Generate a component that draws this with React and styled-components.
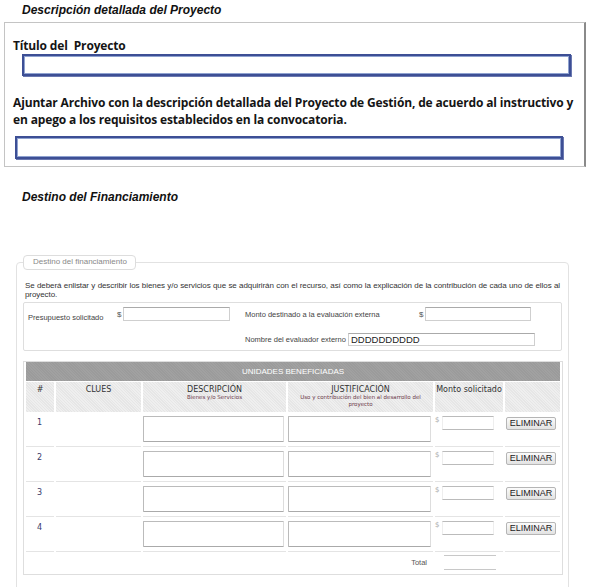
import styled, { createGlobalStyle } from 'styled-components';

const Global = createGlobalStyle`
  body { margin: 0; background: #fff; font-family: "Liberation Sans", Arial, sans-serif; }
`;

const Page = styled.div`
  width: 590px;
  padding-top: 2px;
`;

const SectionTitle = styled.h2`
  margin: 0 0 0 22px;
  font-size: 12px;
  line-height: 16px;
  font-style: italic;
  font-weight: bold;
  color: #111;
  height: ${p => p.$h}px;
`;

const Panel = styled.div`
  margin: 0 4px 0 4px;
  height: 145px;
  box-sizing: border-box;
  border: 1px solid #c4c4c4;
  border-right: 2px solid #8a8a8a;
  padding: 14px 10px 0 8px;
`;

const BoldLabel = styled.div`
  font-family: "Open Sans", "Liberation Sans", sans-serif;
  font-weight: 700;
  font-size: 12px;
  line-height: 17px;
  color: #151515;
  letter-spacing: -0.15px;
  white-space: nowrap;
  margin-top: ${p => p.$top || 0}px;
`;

const BlueInput = styled.div`
  box-sizing: border-box;
  height: ${p => p.$h}px;
  width: ${p => p.$w}px;
  margin-left: ${p => p.$left}px;
  margin-top: ${p => p.$top}px;
  border: 2px solid #3d4f95;
  box-shadow: inset 0 0 0 1px #8fa2d0, 1px 1px 0 #6a78b0;
  background: #fff;
`;

const Fieldset = styled.fieldset`
  margin: 50px 21px 0 16px;
  padding: 7px 6px 20px 6px;
  border: 1px solid #e2e2e2;
  border-radius: 4px;
  min-width: 0;
`;

const Legend = styled.legend`
  margin-left: 0;
  font-size: 8px;
  color: #888;
  border: 1px solid #ddd;
  border-radius: 4px;
  padding: 1px 8px 2px 9px;
  line-height: 10px;
  background: #fff;
`;

const Intro = styled.p`
  margin: 4px 2px 0 2px;
  font-size: 8px;
  line-height: 9px;
  color: #333;
  letter-spacing: -0.08px;
  text-align: justify;
`;

const FieldsBox = styled.div`
  margin-top: 3px;
  height: 49px;
  box-sizing: border-box;
  border: 1px solid #dedede;
  border-radius: 2px;
  display: grid;
  grid-template-columns: 217px 1fr;
  grid-template-rows: 22px 1fr;
  padding-left: 4px;
`;

const FieldCell = styled.div`
  display: flex;
  align-items: center;
  font-size: 7.5px;
  color: #444;
  grid-column: ${p => p.$col};
  padding-top: ${p => p.$pt || 0}px;
`;

const FieldLabel = styled.span`
  width: ${p => p.$w}px;
  flex-shrink: 0;
  white-space: nowrap;
  padding-top: ${p => p.$pt || 0}px;
`;

const Dollar = styled.span`
  font-size: 8px;
  color: #555;
  width: 6px;
`;

const TextBox = styled.div`
  box-sizing: border-box;
  width: ${p => p.$w}px;
  height: ${p => p.$h || 14}px;
  border: 1px solid #cfcfcf;
  border-top-color: #aaa;
  font-size: 9.5px;
  color: #222;
  line-height: 11px;
  padding-left: 2px;
  background: #fff;
`;

const TableWrap = styled.div`
  margin-top: 10px;
  width: 538px;
  border: 1px solid #dedede;
`;

const Table = styled.table`
  width: 100%;
  border-collapse: separate;
  border-spacing: 2px 0;
  font-family: "DejaVu Sans", Verdana, sans-serif;
  table-layout: fixed;
`;

const GreyBar = styled.th`
  background: #9b9b9b;
  background-image: repeating-linear-gradient(45deg, rgba(255,255,255,0.06) 0 1px, transparent 1px 2px);
  color: #fff;
  font-family: "Liberation Sans", Arial, sans-serif;
  font-size: 8px;
  font-weight: normal;
  height: 19px;
  padding: 0;
  border-bottom: 1px solid #fff;
`;

const HeadCell = styled.th`
  box-sizing: border-box;
  background: #e6e6e6;
  background-image: repeating-linear-gradient(45deg, rgba(255,255,255,0.35) 0 1px, transparent 1px 2px);
  height: 30px;
  padding: 3px 0 0 0;
  vertical-align: top;
  font-size: 8px;
  font-weight: normal;
  color: #333;
  line-height: 9px;
`;

const Sub = styled.div`
  font-size: 5.5px;
  line-height: 7px;
  color: #6b3a4a;
`;

const Cell = styled.td`
  height: ${p => p.$h || 34}px;
  padding: 0;
  vertical-align: top;
  border-bottom: ${p => (p.$last ? 0 : '1px solid #e4e4e4')};
  font-size: 8px;
  color: #444;
  text-align: ${p => p.$align || 'left'};
`;

const RowNum = styled.div`
  padding: 6px 0 0 11px;
  font-size: 8px;
  color: #3a3a6a;
`;

const Area = styled.div`
  box-sizing: border-box;
  margin-top: 4px;
  width: ${p => p.$w}px;
  height: 26px;
  border: 1px solid #bbb;
  border-right-color: #ddd;
  border-bottom-color: #aaa;
  border-radius: 1px;
  background: #fff;
`;

const MontoWrap = styled.div`
  display: flex;
  align-items: flex-start;
  padding-top: 4px;
  gap: 3px;
`;

const SmallDollar = styled.span`
  font-size: 7px;
  color: #aaa;
  line-height: 8px;
`;

const MontoInput = styled.div`
  box-sizing: border-box;
  width: 52px;
  height: 14px;
  border-top: 1px solid #bbb;
  border-bottom: 1px solid #bbb;
  border-left: 1px solid #eee;
  border-right: 1px solid #eee;
`;

const Button = styled.button`
  margin: 5px 0 0 1px;
  height: 13px;
  width: 50px;
  padding: 0;
  font-family: "Liberation Sans", Arial, sans-serif;
  font-size: 9px;
  line-height: 11px;
  color: #222;
  background: linear-gradient(#fbfbfb, #e2e2e2);
  border: 1px solid #b5b5b5;
  border-radius: 2px;
`;

const TotalLabel = styled.span`
  display: inline-block;
  padding: 6px 6px 0 0;
  font-family: "Liberation Sans", Arial, sans-serif;
  font-size: 7.5px;
  color: #555;
`;

const TotalBox = styled.div`
  box-sizing: border-box;
  margin: 3px 0 0 9px;
  width: 52px;
  height: 15px;
  border-top: 1px solid #c8c8c8;
  border-bottom: 1px solid #c8c8c8;
`;

const rows = [1, 2, 3, 4];

export default function App() {
  return (
    <Page>
      <Global />
      <SectionTitle $h={20}>Descripción detallada del Proyecto</SectionTitle>
      <Panel>
        <BoldLabel>Título del&nbsp; Proyecto</BoldLabel>
        <BlueInput $w={549} $h={22} $left={9} $top={0} />
        <BoldLabel $top={18}>
          Ajuntar Archivo con la descripción detallada del Proyecto de Gestión, de acuerdo al instructivo y
          <br />
          en apego a los requisitos establecidos en la convocatoria.
        </BoldLabel>
        <BlueInput $w={548} $h={23} $left={2} $top={8} />
      </Panel>

      <SectionTitle as="h3" style={{ marginTop: 22 }} $h={16}>Destino del Financiamiento</SectionTitle>

      <Fieldset>
        <Legend>Destino del financiamiento</Legend>
        <Intro>
          Se deberá enlistar y describir los bienes y/o servicios que se adquirirán con el recurso, así como la explicación de la contribución de cada uno de ellos al proyecto.
        </Intro>
        <FieldsBox>
          <FieldCell $col={1}>
            <FieldLabel $w={89} $pt={6}>Presupuesto solicitado</FieldLabel>
            <Dollar>$</Dollar>
            <TextBox $w={107} />
          </FieldCell>
          <FieldCell $col={2}>
            <FieldLabel $w={174}>Monto destinado a la evaluación externa</FieldLabel>
            <Dollar>$</Dollar>
            <TextBox $w={106} />
          </FieldCell>
          <FieldCell $col={2} $pt={3}>
            <FieldLabel $w={103}>Nombre del evaluador externo</FieldLabel>
            <TextBox $w={187} $h={13}>DDDDDDDDDD</TextBox>
          </FieldCell>
        </FieldsBox>

        <TableWrap>
          <Table>
            <colgroup>
              <col style={{ width: 28 }} />
              <col style={{ width: 85 }} />
              <col style={{ width: 143 }} />
              <col style={{ width: 145 }} />
              <col style={{ width: 68 }} />
              <col />
            </colgroup>
            <thead>
              <tr>
                <GreyBar colSpan={6}>UNIDADES BENEFICIADAS</GreyBar>
              </tr>
              <tr>
                <HeadCell>#</HeadCell>
                <HeadCell>CLUES</HeadCell>
                <HeadCell>
                  DESCRIPCIÓN
                  <Sub>Bienes y/o Servicios</Sub>
                </HeadCell>
                <HeadCell>
                  JUSTIFICACIÓN
                  <Sub>Uso y contribución del bien al desarrollo del proyecto</Sub>
                </HeadCell>
                <HeadCell>Monto solicitado</HeadCell>
                <HeadCell />
              </tr>
            </thead>
            <tbody>
              {rows.map(n => (
                <tr key={n}>
                  <Cell><RowNum>{n}</RowNum></Cell>
                  <Cell />
                  <Cell><Area $w={141} /></Cell>
                  <Cell><Area $w={143} /></Cell>
                  <Cell>
                    <MontoWrap>
                      <SmallDollar>$</SmallDollar>
                      <MontoInput />
                    </MontoWrap>
                  </Cell>
                  <Cell><Button>ELIMINAR</Button></Cell>
                </tr>
              ))}
              <tr>
                <Cell $h={22} $last colSpan={4} $align="right">
                  <TotalLabel>Total</TotalLabel>
                </Cell>
                <Cell $h={22} $last><TotalBox /></Cell>
                <Cell $h={22} $last />
              </tr>
            </tbody>
          </Table>
        </TableWrap>
      </Fieldset>
    </Page>
  );
}
